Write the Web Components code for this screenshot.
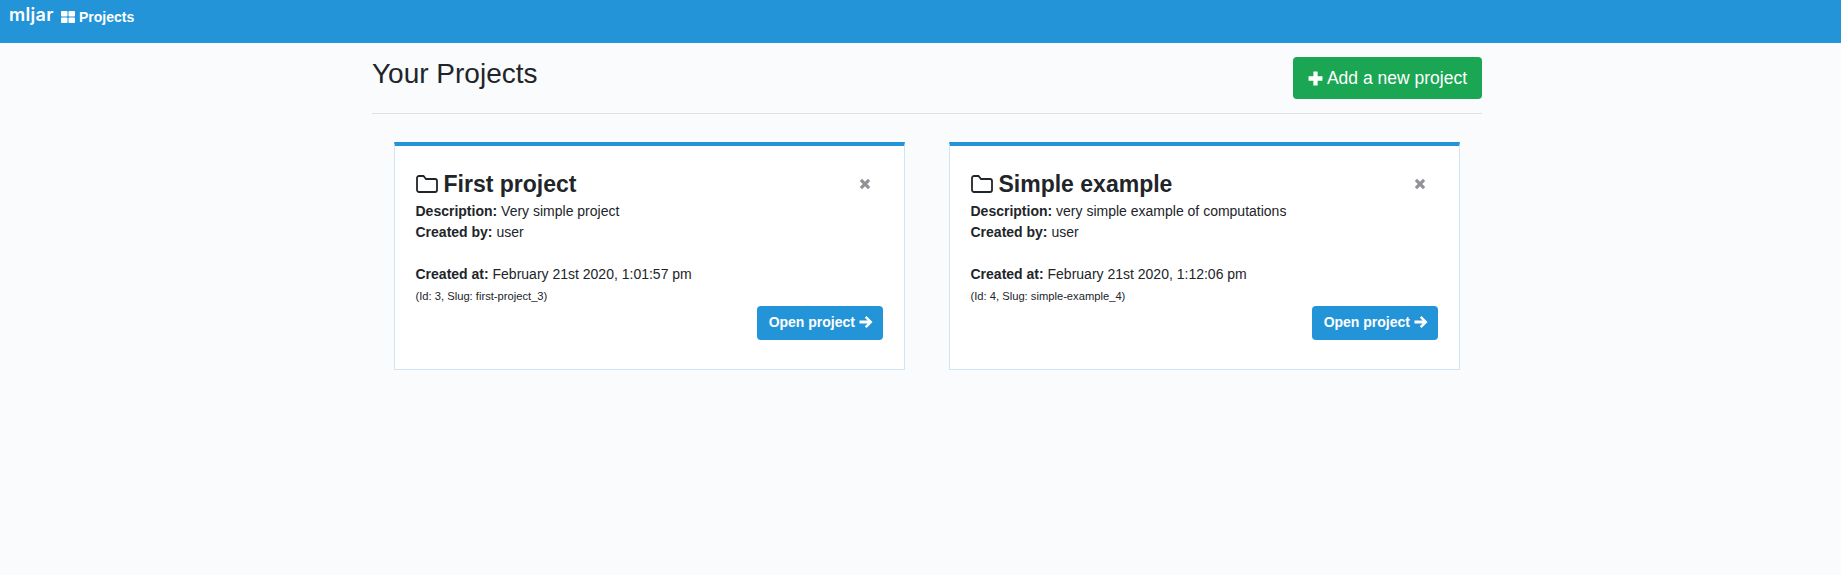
<!DOCTYPE html>
<html lang="en">
<head>
<meta charset="utf-8">
<title>Projects</title>
<style>
  html, body { margin: 0; padding: 0; }
  body {
    background: #f9fbfd;
    color: #212529;
    font-family: "Liberation Sans", Arial, sans-serif;
    font-size: 14px;
    line-height: 21px;
    min-height: 575px;
  }
</style>
</head>
<body>
<top-nav></top-nav>
<projects-page>
  <project-card name="First project" description="Very simple project" user="user"
    created="February 21st 2020, 1:01:57 pm" pid="3" slug="first-project_3"></project-card>
  <project-card name="Simple example" description="very simple example of computations" user="user"
    created="February 21st 2020, 1:12:06 pm" pid="4" slug="simple-example_4"></project-card>
</projects-page>

<script>
class TopNav extends HTMLElement {
  constructor() {
    super();
    this.attachShadow({ mode: "open" }).innerHTML = `
      <style>
        :host { display: block; height: 43px; background: #2394d8; color: #fff; }
        .bar { display: flex; align-items: center; height: 34px; padding-left: 9px; }
        .logo { font: 600 18px/1 Inter, sans-serif; letter-spacing: .3px; width: 52px; position: relative; top: -2px; }
        .link { display: flex; align-items: center; gap: 4px; font-weight: 700; font-size: 14px; }
        svg { display: block; fill: #fff; }
      </style>
      <div class="bar">
        <span class="logo">mljar</span>
        <span class="link">
          <svg width="14" height="12" viewBox="0 0 14 12">
            <rect width="6.500" height="5.500" rx=".8"/><rect x="7.500" width="6.500" height="5.500" rx=".8"/>
            <rect y="6.500" width="6.500" height="5.500" rx=".8"/><rect x="7.500" y="6.500" width="6.500" height="5.500" rx=".8"/>
          </svg>
          Projects
        </span>
      </div>`;
  }
}
customElements.define("top-nav", TopNav);

class ProjectsPage extends HTMLElement {
  constructor() {
    super();
    this.attachShadow({ mode: "open" }).innerHTML = `
      <style>
        :host { display: block; width: 1110px; margin: 0 auto; padding-left: 13px; box-sizing: content-box; }
        .head { display: flex; justify-content: space-between; align-items: flex-start; padding-top: 14px; height: 56px; border-bottom: 1px solid #d9e2e9; }
        h1 { margin: 0; font-size: 28px; font-weight: 400; line-height: 34px; }
        .add { display: flex; align-items: center; gap: 4px; height: 42px; box-sizing: border-box; padding: 0 15px; background: #1aa653; color: #fff; border-radius: 4px; font-size: 17.5px; }
        .add svg { display: block; fill: #fff; }
        .grid { display: grid; grid-template-columns: 511px 511px; column-gap: 44px; padding: 28px 22px 0; }
      </style>
      <div class="head">
        <h1>Your Projects</h1>
        <div class="add">
          <svg width="15" height="15" viewBox="0 0 14 14"><path d="M5 .5h4v4.500h4.500v4H9v4.500H5V9H.5V5H5z"/></svg>
          Add a new project
        </div>
      </div>
      <div class="grid"><slot></slot></div>`;
  }
}
customElements.define("projects-page", ProjectsPage);

class ProjectCard extends HTMLElement {
  constructor() {
    super();
    this.attachShadow({ mode: "open" }).innerHTML = `
      <style>
        :host { display: block; box-sizing: border-box; height: 228px; background: #fff; border: 1px solid #cfe4f5; border-top: 4px solid #2394d8; padding: 20px 21px 0 20.500px; }
        .title { display: flex; align-items: center; justify-content: space-between; height: 35px; }
        .name { display: flex; align-items: center; gap: 6px; font-size: 23px; font-weight: 700; line-height: 35px; }
        .name span { position: relative; top: 1px; }
        .name svg { display: block; fill: none; stroke: #212529; stroke-width: 1.8; }
        .close { margin-right: 12px; display: block; fill: #8f9296; }
        b { font-weight: 700; }
        .gap { margin-top: 21px; }
        small { display: block; font-size: 11.200px; line-height: 17px; margin-top: 3px; }
        .foot { display: flex; justify-content: flex-end; margin-top: 1px; }
        .open { display: flex; align-items: center; gap: 4px; height: 34px; box-sizing: border-box; padding: 0 10px 2px 12px; background: #2394d8; color: #fff; border-radius: 4px; font-weight: 700; }
        .open svg { display: block; fill: #fff; }
      </style>
      <div class="title">
        <div class="name">
          <svg width="22" height="20" viewBox="0 0 22 20"><path d="M1 4a2 2 0 0 1 2-2h4.500l2.500 3h9a2 2 0 0 1 2 2v9a2 2 0 0 1-2 2H3a2 2 0 0 1-2-2z"/></svg>
          <span class="n"></span>
        </div>
        <svg class="close" width="12" height="12" viewBox="0 0 12 12"><path d="M3 .8l3 3 3-3 2.200 2.200-3 3 3 3L9 11.200l-3-3-3 3L.8 9l3-3-3-3z"/></svg>
      </div>
      <div><b>Description:</b> <span class="d"></span></div>
      <div><b>Created by:</b> <span class="u"></span></div>
      <div class="gap"><b>Created at:</b> <span class="c"></span></div>
      <small></small>
      <div class="foot">
        <div class="open">Open project
          <svg width="14" height="14" viewBox="0 0 14 14"><path d="M7.500 1l6 6-6 6-1.700-1.700L8.600 8.500H.5v-3h8.100L5.800 2.700z"/></svg>
        </div>
      </div>`;
  }

  connectedCallback() {
    const s = this.shadowRoot;
    s.querySelector(".n").textContent = this.getAttribute("name");
    s.querySelector(".d").textContent = this.getAttribute("description");
    s.querySelector(".u").textContent = this.getAttribute("user");
    s.querySelector(".c").textContent = this.getAttribute("created");
    s.querySelector("small").textContent =
      "(Id: " + this.getAttribute("pid") + ", Slug: " + this.getAttribute("slug") + ")";
  }
}
customElements.define("project-card", ProjectCard);
</script>
</body>
</html>
